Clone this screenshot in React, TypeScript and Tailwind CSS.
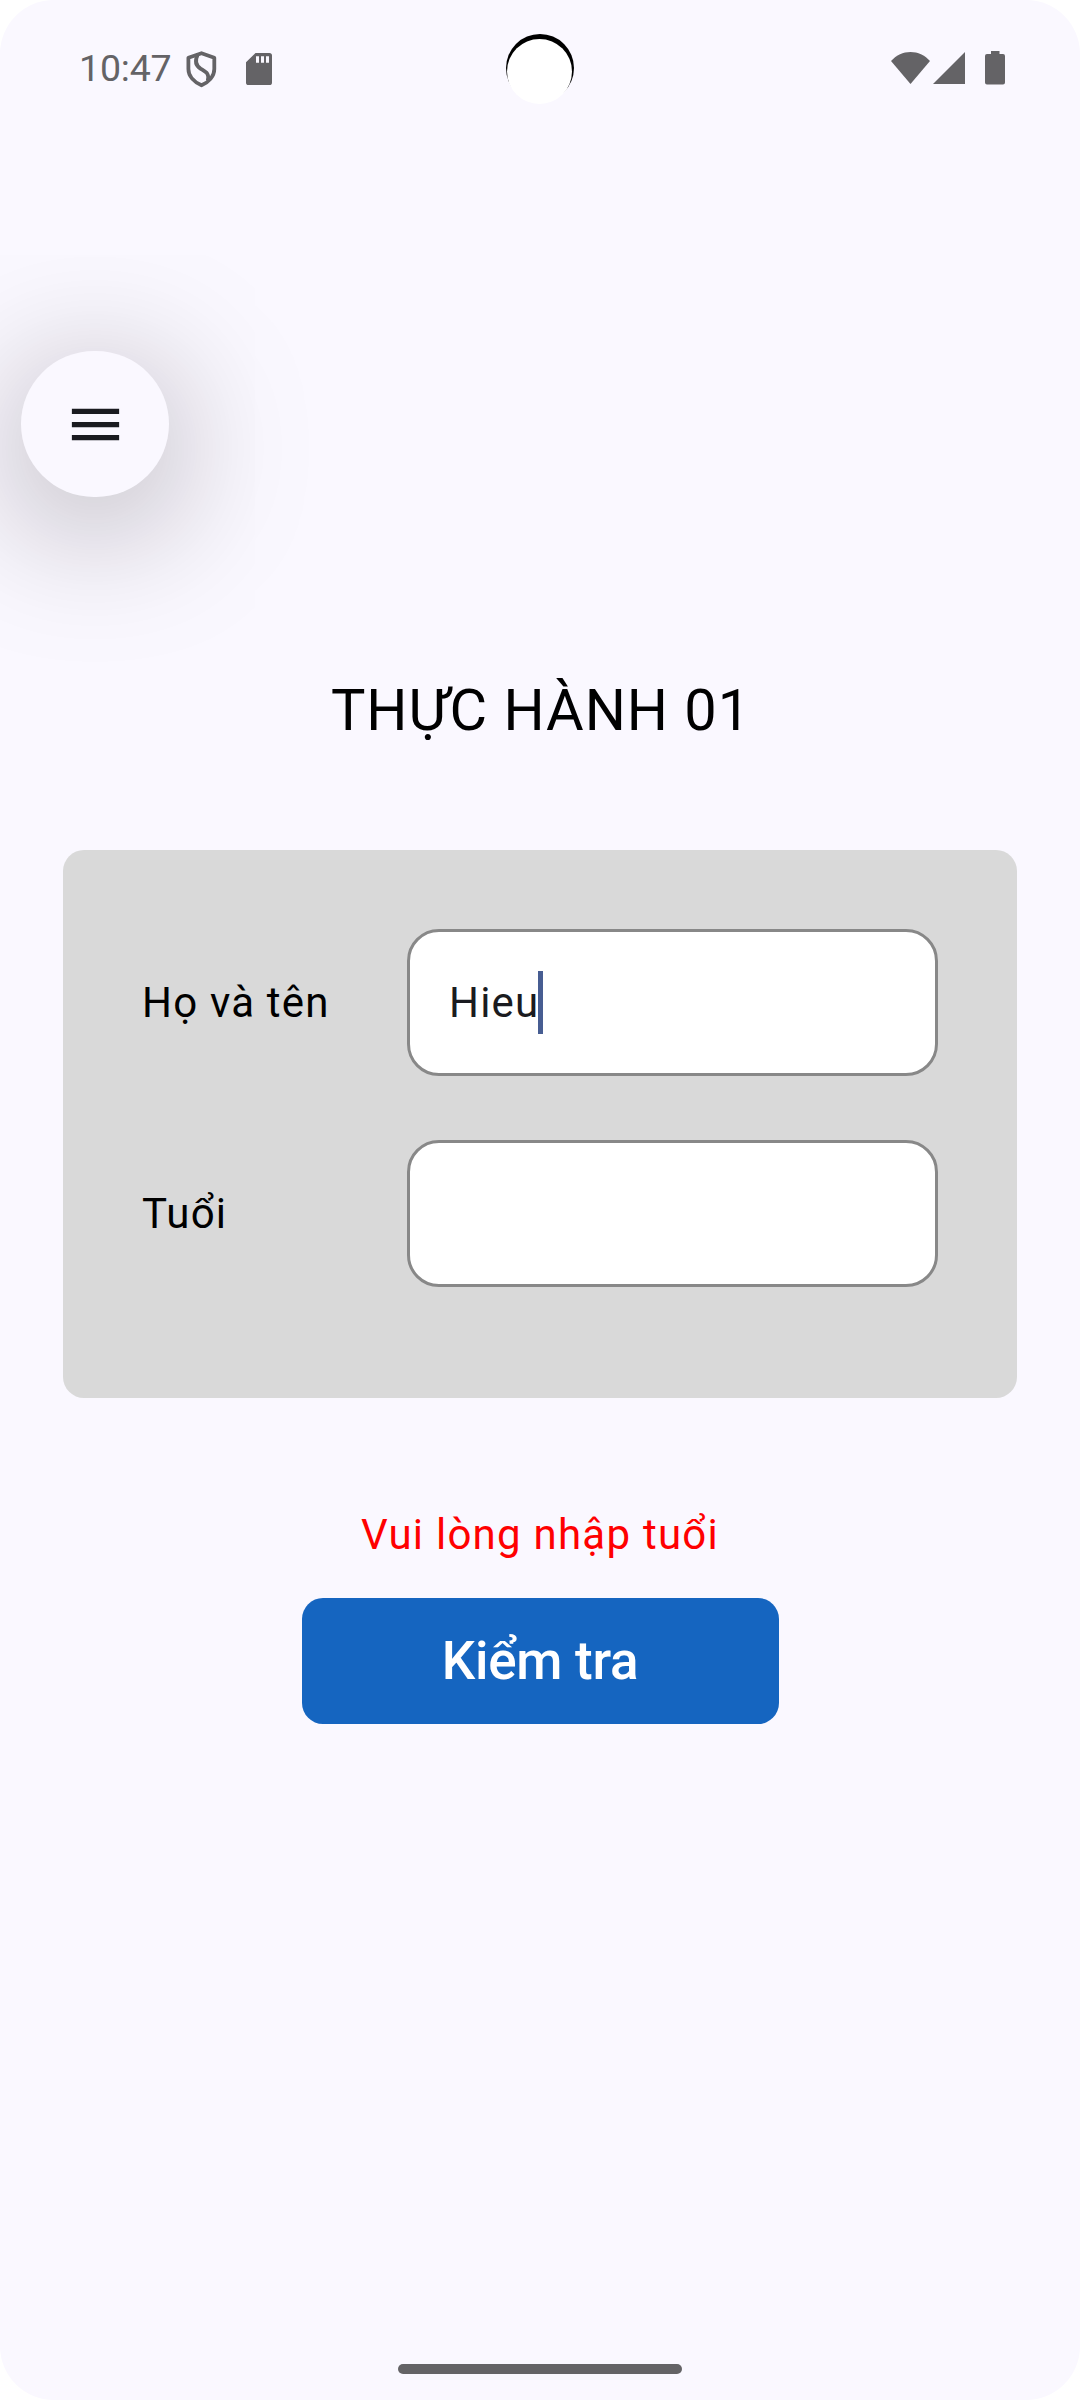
import React from "react";

function StatusBar() {
  return (
    <header className="relative flex h-[136px] items-center justify-between pl-[79px] pr-[75px]">
      <div className="flex items-center text-[#646366]">
        <span className="w-[92px] text-[37.5px] leading-[44px] tracking-[-0.2px] whitespace-nowrap">10:47</span>
        <svg className="ml-[15px] mt-[3px] h-[37px] w-[31px]" viewBox="0 0 31 37" fill="none" stroke="#646366" strokeWidth="3.8">
          <path d="M15.5 2.2 L28.3 6.8 V18 C28.3 25.5 22.5 31.3 15.5 34.3 C8.5 31.3 2.4 25.5 2.4 18 V6.8 Z" strokeLinejoin="round" />
          <path d="M11.6 4 C8.6 10 9.4 14.4 14.8 17.8 C20.6 21.4 23.4 22.6 21.8 29.4" />
        </svg>
        <svg className="ml-[29px] mt-[1px] h-[32px] w-[26px]" viewBox="0 0 26 32" fill="#646366" fillRule="evenodd">
          <path d="M9.5 0 H23.4 A2.6 2.6 0 0 1 26 2.6 V29.4 A2.6 2.6 0 0 1 23.4 32 H2.6 A2.6 2.6 0 0 1 0 29.4 V9.2 Z M10 3.2 V9.8 H13 V3.2 Z M15 3.2 V9.8 H18 V3.2 Z M20 3.2 V9.8 H23 V3.2 Z" />
        </svg>
      </div>
      <div className="absolute left-[506px] top-[34px] h-[68px] w-[68px] rounded-full bg-black" />
      <div className="absolute left-[507px] top-[39px] h-[65px] w-[65px] rounded-full bg-white" />
      <div className="flex items-center">
        <svg className="-mt-px h-[32px] w-[39px]" viewBox="0 0 39 32" fill="#646366">
          <path d="M0 9 C5.5 3 12 0 19.5 0 C27 0 33.5 3 39 9 L19.5 32 Z" />
        </svg>
        <svg className="-mt-px mr-px ml-[3px] h-[32px] w-[32px]" viewBox="0 0 32 32" fill="#646366">
          <path d="M0 32 L32 0 V32 Z" />
        </svg>
        <svg className="ml-[19px] h-[34px] w-[20px]" viewBox="0 0 20 34" fill="#646366">
          <path d="M6 0 H14.5 V3 H18 A2 2 0 0 1 20 5 V31.5 A2 2 0 0 1 18 33.5 H2 A2 2 0 0 1 0 31.5 V5 A2 2 0 0 1 2 3 H6 Z" />
        </svg>
      </div>
    </header>
  );
}

function Field({ label, value, focused = false }: { label: string; value: string; focused?: boolean }) {
  return (
    <div className="flex h-[147px] items-center">
      <span className="w-[265px] text-[42px] leading-[63px] tracking-[1.2px] text-black">{label}</span>
      <div className="flex h-[147px] w-[531px] items-center rounded-[32px] border-[3px] border-[#888888] bg-white pl-[39px]">
        <span className="text-[42px] leading-[63px] tracking-[1.2px] text-[#1a1b20]">{value}</span>
        {focused && <span className="-ml-px h-[63px] w-[5px] bg-[#475d92]" />}
      </div>
    </div>
  );
}

export default function App() {
  return (
    <div className="h-[2400px] w-[1080px] bg-white">
      <div className="flex h-full flex-col overflow-hidden rounded-[54px] bg-[#faf8ff] font-['Roboto',sans-serif]">
        <StatusBar />
        <button
          aria-label="Menu"
          className="mt-[215px] ml-[21px] flex h-[146px] w-[148px] shrink-0 items-center justify-center rounded-full bg-[#faf8ff] shadow-[0_24px_140px_0_rgba(20,10,14,0.36)]"
        >
          <svg className="h-[63px] w-[63px]" viewBox="0 0 24 24" fill="#1a1b20">
            <path d="M3 18h18v-2H3v2zm0-5h18v-2H3v2zm0-7v2h18V6H3z" />
          </svg>
        </button>
        <h1 className="mt-[171px] pl-[2px] text-center text-[57.75px] leading-[84px] tracking-[0.95px] text-black">THỰC HÀNH 01</h1>
        <section className="mx-[63px] mt-[98px] flex h-[548px] shrink-0 flex-col gap-[64px] rounded-[21px] bg-[#d9d9d9] px-[79px] pt-[79px]">
          <Field label="Họ và tên" value="Hieu" focused />
          <Field label="Tuổi" value="" />
        </section>
        <p className="mt-[105px] text-center text-[42px] leading-[63px] tracking-[1.25px] text-[#ff0000]">Vui lòng nhập tuổi</p>
        <button className="mx-auto mt-[32px] h-[126px] w-[477px] shrink-0 rounded-[21px] bg-[#1565c0] pt-[2px] text-[53px] font-medium tracking-[-0.3px] text-white">
          Kiểm tra
        </button>
        <div className="mx-auto mt-auto mb-[26px] h-[10px] w-[284px] rounded-full bg-[#646366]" />
      </div>
    </div>
  );
}
